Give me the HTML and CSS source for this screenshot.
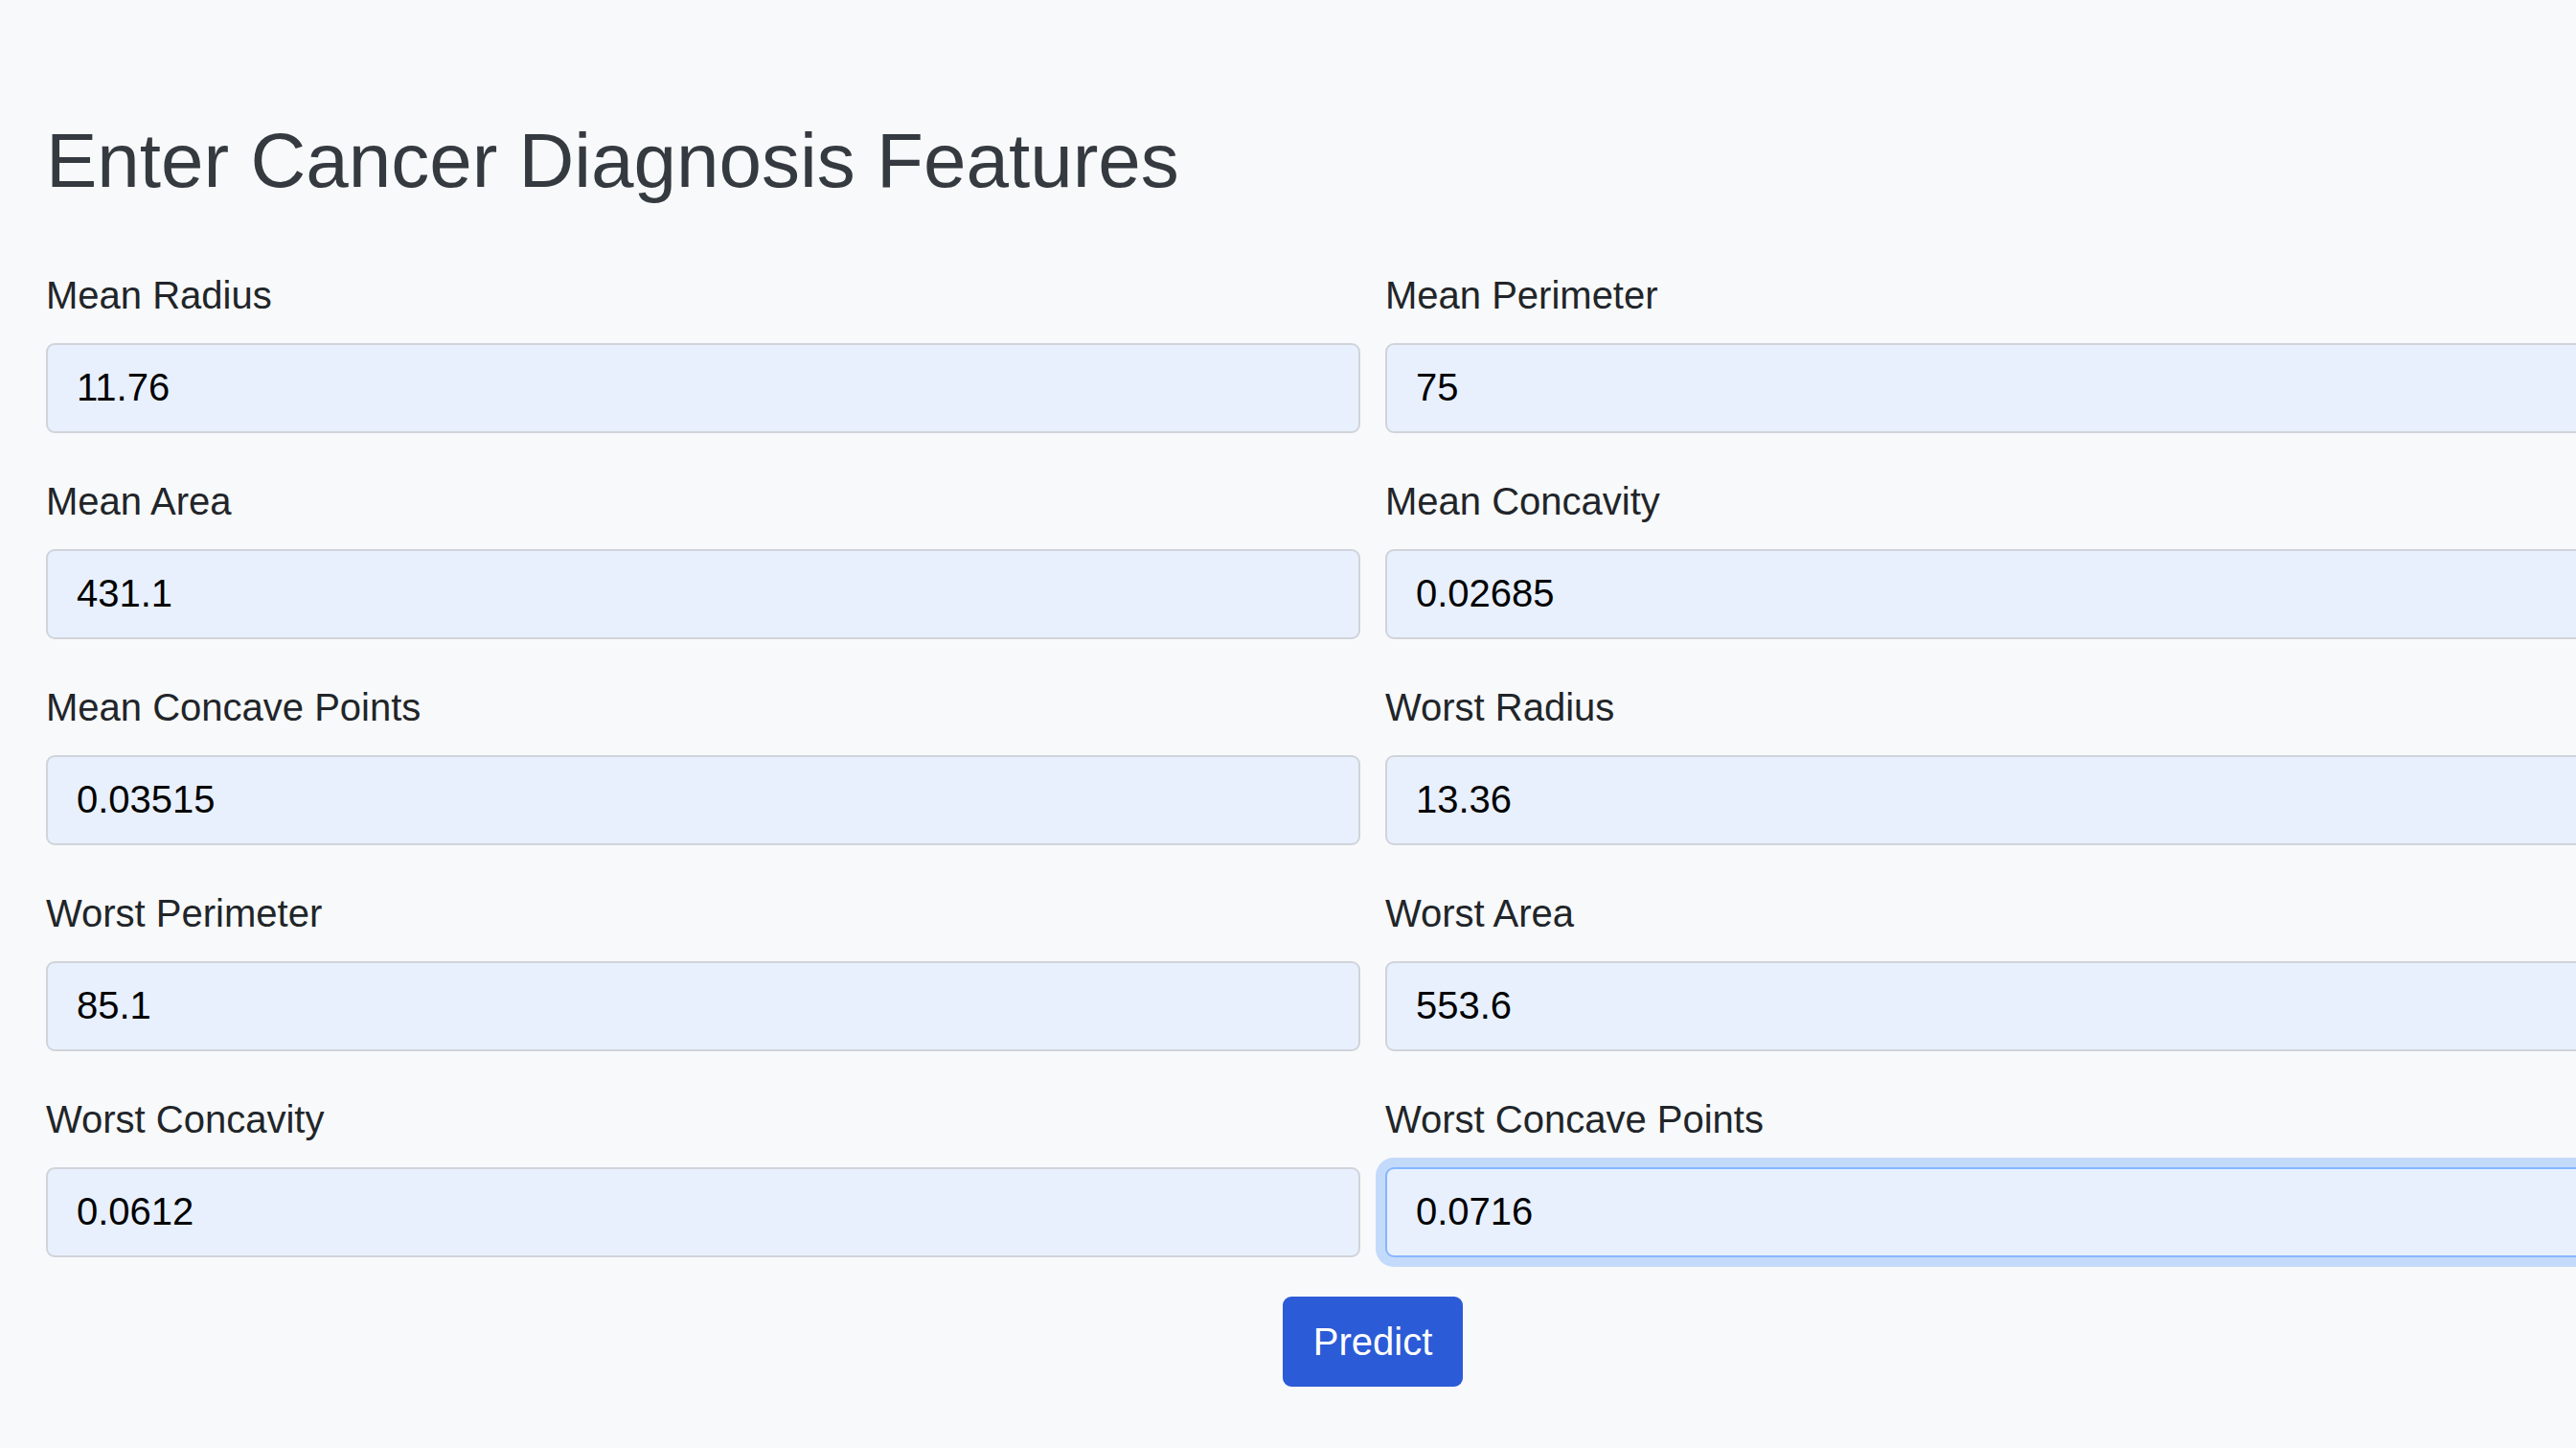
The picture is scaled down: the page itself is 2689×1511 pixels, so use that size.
FILE: index.html
```html
<!DOCTYPE html>
<html lang="en">
<head>
<meta charset="utf-8">
<title>Cancer Diagnosis</title>
<link rel="stylesheet" href="styles.css">
</head>
<body>
<main class="container">
  <h2 class="title">Enter Cancer Diagnosis Features</h2>
  <form class="form">
    <div class="grid">
      <div class="group"><label class="label">Mean Radius</label><input class="field" type="text" value="11.76"></div>
      <div class="group"><label class="label">Mean Perimeter</label><input class="field" type="text" value="75"></div>
      <div class="group"><label class="label">Mean Area</label><input class="field" type="text" value="431.1"></div>
      <div class="group"><label class="label">Mean Concavity</label><input class="field" type="text" value="0.02685"></div>
      <div class="group"><label class="label">Mean Concave Points</label><input class="field" type="text" value="0.03515"></div>
      <div class="group"><label class="label">Worst Radius</label><input class="field" type="text" value="13.36"></div>
      <div class="group"><label class="label">Worst Perimeter</label><input class="field" type="text" value="85.1"></div>
      <div class="group"><label class="label">Worst Area</label><input class="field" type="text" value="553.6"></div>
      <div class="group"><label class="label">Worst Concavity</label><input class="field" type="text" value="0.0612"></div>
      <div class="group"><label class="label">Worst Concave Points</label><input class="field field-focus" type="text" value="0.0716"></div>
    </div>
    <div class="actions">
      <button class="btn" type="button">Predict</button>
    </div>
  </form>
</main>
</body>
</html>
```

FILE: styles.css
```css
html, body {
  margin: 0;
  padding: 0;
  overflow: hidden;
  background: #f8f9fa;
}
body {
  font-family: "Liberation Sans", Arial, sans-serif;
  color: #212529;
  font-size: 40px;
  line-height: 1.5;
  width: 2689px;
  height: 1511px;
}
.container {
  width: 2770px;
  padding: 120px 0 0 48px;
}
.title {
  margin: 0 0 61.5px 0;
  font-size: 80px;
  font-weight: 500;
  line-height: 1.2;
  color: #343a40;
}
.form { margin: 0; }
.grid {
  display: grid;
  grid-template-columns: 1372px 1372px;
  column-gap: 26px;
}
.group {
  display: flex;
  flex-direction: column;
  margin-bottom: 41px;
}
.label {
  display: block;
  font-size: 40px;
  line-height: 60px;
  margin-bottom: 20px;
  color: #212529;
}
.field {
  box-sizing: border-box;
  height: 94px;
  width: 100%;
  padding: 15px 30px;
  font-family: "Liberation Sans", Arial, sans-serif;
  font-size: 40px;
  line-height: 60px;
  color: #000;
  background: #e8f0fe;
  border: 2.5px solid #d0d4da;
  border-radius: 9px;
  outline: none;
  margin: 0;
}
.field-focus {
  border-color: #86b7fe;
  box-shadow: 0 0 0 10px rgba(13, 110, 253, 0.22);
}
.actions {
  display: flex;
  justify-content: center;
}
.btn {
  box-sizing: border-box;
  height: 94px;
  padding: 15px 30px;
  font-family: "Liberation Sans", Arial, sans-serif;
  font-size: 40px;
  line-height: 60px;
  color: #fff;
  background: #2b5bd7;
  border: 2.5px solid #2b5bd7;
  border-radius: 9px;
  cursor: pointer;
}
```
